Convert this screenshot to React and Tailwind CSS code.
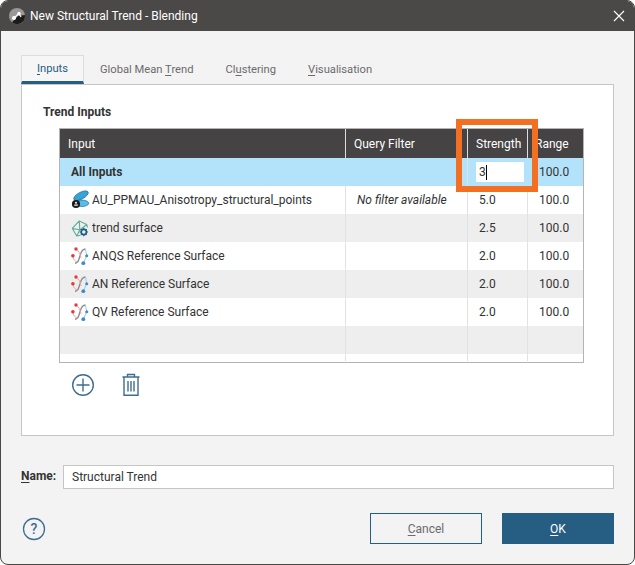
const FONT = { fontFamily: "Roboto, 'Liberation Sans', sans-serif" };

function RefIcon() {
  return (
    <svg width="20" height="20" viewBox="0 0 20 20" className="shrink-0" fill="none">
      <path d="M4 17.3 C8 17 8 12 9 9.7 C10 6 12 3 14.5 3" stroke="#8f8f8f" strokeWidth="1.4" />
      <path d="M5 3 C8 5 9.5 8 10 12 M1.7 9.7 C2 13 4 15 6.5 16.5" stroke="#eda3a3" strokeWidth="1" />
      <path d="M14.5 3 L15.7 9.7 L12.3 17.3" stroke="#9cc6e4" strokeWidth="1" />
      <circle cx="5" cy="3" r="1.7" fill="#e5393b" />
      <circle cx="1.9" cy="9.7" r="1.8" fill="#e5393b" />
      <circle cx="15.7" cy="9.7" r="1.5" fill="#3c8cc8" />
      <circle cx="12.3" cy="17.2" r="1.9" fill="#3c8cc8" />
    </svg>
  );
}

function PointsIcon() {
  return (
    <svg width="20" height="20" viewBox="0 0 20 20" className="shrink-0">
      <ellipse cx="10" cy="5.7" rx="8" ry="3.4" transform="rotate(-28 10 5.7)" fill="#37a4d6" stroke="#1d6d96" strokeWidth="0.7" />
      <ellipse cx="10.7" cy="13.3" rx="7" ry="3.2" fill="#58bde6" stroke="#1d6d96" strokeWidth="0.7" />
      <circle cx="5" cy="14" r="4.1" fill="#1c1c1c" />
      <circle cx="5" cy="12.8" r="1" fill="#fff" />
      <rect x="3.2" y="14.5" width="3.6" height="1.2" fill="#fff" />
    </svg>
  );
}

function SurfaceIcon() {
  return (
    <svg width="20" height="20" viewBox="0 0 20 20" className="shrink-0" fill="none">
      <path d="M1.2 10.3 L8.3 3 L15.7 6.5 L16.5 9.5 M1.2 10.3 L5.7 18 L9.5 17.2 M1.2 10.3 L8.8 12 L15.7 6.5 M8.3 3 L8.8 12 L5.7 18" stroke="#5fae98" strokeWidth="1.1" strokeLinejoin="round" />
      <circle cx="12.8" cy="14" r="2.6" stroke="#1f5f85" strokeWidth="1.7" />
      <path d="M12.8 9.8 V11 M12.8 17 V18.2 M8.6 14 H9.8 M15.8 14 H17 M9.9 11.1 L10.7 11.9 M14.9 16.1 L15.7 16.9 M9.9 16.9 L10.7 16.1 M14.9 11.9 L15.7 11.1" stroke="#1f5f85" strokeWidth="1.2" />
    </svg>
  );
}

function AppIcon() {
  return (
    <svg width="16" height="16" viewBox="0 0 16 16" className="shrink-0">
      <circle cx="8" cy="8" r="8" fill="#9a9896" />
      <path d="M3 14.2 A8 8 0 0 0 15.9 7 L9 8 Z" fill="#1b1b1b" />
      <circle cx="5" cy="10" r="2" fill="#fff" />
      <circle cx="10" cy="5.5" r="1.7" fill="#fff" />
      <path d="M5 10 L10 5.5 L12 9" stroke="#fff" strokeWidth="1.2" fill="none" />
    </svg>
  );
}

const rows = [
  { name: "AU_PPMAU_Anisotropy_structural_points", icon: <PointsIcon />, filter: "No filter available", strength: "5.0", range: "100.0", bg: "bg-white" },
  { name: "trend surface", icon: <SurfaceIcon />, filter: "", strength: "2.5", range: "100.0", bg: "bg-[#eeeeee]" },
  { name: "ANQS Reference Surface", icon: <RefIcon />, filter: "", strength: "2.0", range: "100.0", bg: "bg-white" },
  { name: "AN Reference Surface", icon: <RefIcon />, filter: "", strength: "2.0", range: "100.0", bg: "bg-[#eeeeee]" },
  { name: "QV Reference Surface", icon: <RefIcon />, filter: "", strength: "2.0", range: "100.0", bg: "bg-white" },
];

const GRID = "grid grid-cols-[286px_122px_60px_1fr]";
const CELL = "flex items-center border-r border-[#e2e2e2] last:border-r-0";

function Tab({ pre, u, post }) {
  return (
    <div className="mb-[1px] flex h-[26px] items-center px-[16px] text-[11.2px] text-[#6b6b6b]">
      <span>{pre}<span className="underline underline-offset-2">{u}</span>{post}</span>
    </div>
  );
}

export default function App() {
  return (
    <div style={FONT} className="relative flex h-[565px] w-[635px] flex-col overflow-hidden rounded-[8px] border border-[#4a4846] bg-[#f3f3f3] text-[#333333]">
      <div className="flex h-[30px] shrink-0 items-center bg-[#4b4947] pl-[8px] pr-[9px] text-white">
        <AppIcon />
        <span className="ml-[5px] text-[12px]">New Structural Trend - Blending</span>
        <svg className="ml-auto" width="12" height="12" viewBox="0 0 12 12" stroke="#fff" strokeWidth="1.1">
          <path d="M1 1 L11 11 M11 1 L1 11" />
        </svg>
      </div>

      <div className="flex flex-1 flex-col pl-[20px] pr-[20px] pt-[24px]">
        <div className="flex h-[29px] items-end">
          <div className="flex h-[29px] w-[63px] items-center justify-center border-x border-t border-[#dddddd] border-b-[3px] border-b-[#265d82] bg-[#f6f6f6] pt-[2px] text-[11.2px] text-[#265d82]">
            <span><span className="underline underline-offset-2">I</span>nputs</span>
          </div>
          <Tab pre="Global Mean " u="T" post="rend" />
          <Tab pre="Cl" u="u" post="stering" />
          <Tab pre="" u="V" post="isualisation" />
        </div>

        <div className="h-[352px] border border-[#c6c6c6] bg-white pl-[21px] pr-[29px] pt-[19px]">
          <div className="h-[24px] text-[12px] font-bold leading-[16px] text-[#333333]">Trend Inputs</div>
          <div className="ml-[16px] h-[235px] border border-[#b4b4b4] bg-white text-[12px]">
            <div className={`${GRID} h-[29px] bg-[#454343] text-white`}>
              <div className="flex items-center border-r border-[#dddddd] pl-[8px]">Input</div>
              <div className="flex items-center border-r border-[#dddddd] pl-[8px]">Query Filter</div>
              <div className="flex items-center border-r border-[#dddddd] pl-[8px]">Strength</div>
              <div className="flex items-center pl-[7px]">Range</div>
            </div>
            <div className={`${GRID} h-[28px] bg-[#b3e3fb]`}>
              <div className="flex items-center pl-[11px] font-bold">All Inputs</div>
              <div className={CELL} />
              <div className="flex items-center pl-[8px]">
                <div className="flex h-[20px] w-[48px] items-center bg-white pl-[3px]">
                  3<span className="h-[15px] w-px bg-black" />
                </div>
              </div>
              <div className="flex items-center pl-[11px]">100.0</div>
            </div>
            {rows.map((r) => (
              <div key={r.name} className={`${GRID} h-[28px] ${r.bg}`}>
                <div className={`${CELL} gap-[1px] pl-[11px]`}>
                  {r.icon}
                  <span>{r.name}</span>
                </div>
                <div className={`${CELL} pl-[11px] italic`}>{r.filter}</div>
                <div className={`${CELL} pl-[11px]`}>{r.strength}</div>
                <div className={`${CELL} pl-[11px]`}>{r.range}</div>
              </div>
            ))}
            <div className={`${GRID} h-[28px] bg-[#eeeeee]`}>
              <div className={CELL} /><div className={CELL} /><div className={CELL} /><div className={CELL} />
            </div>
            <div className={`${GRID} h-[7px] bg-white`}>
              <div className={CELL} /><div className={CELL} /><div className={CELL} /><div className={CELL} />
            </div>
          </div>
          <div className="ml-[16px] mt-[10px] flex items-center gap-[26px] pl-[12px]">
            <svg width="24" height="24" viewBox="0 0 24 24" fill="none" stroke="#3e6d8f" strokeWidth="1.4">
              <circle cx="12" cy="12" r="10.3" />
              <path d="M12 5.5 V18.5 M5.5 12 H18.5" />
            </svg>
            <svg width="20" height="24" viewBox="0 0 20 24" fill="none" stroke="#3e6d8f" strokeWidth="1.4">
              <path d="M1.5 4 H18.5 M6.5 4 V1.5 H13.5 V4 M3 4 V22.3 H17 V4 M7 8 V18.5 M10 8 V18.5 M13 8 V18.5" />
            </svg>
          </div>
        </div>

        <div className="mt-[28px] flex h-[25px] items-center">
          <span className="mb-[2px] w-[42px] text-[12px] font-bold text-[#333333]">
            <span className="underline underline-offset-2">N</span>ame:
          </span>
          <div className="flex h-[24px] flex-1 items-center border border-[#c6c6c6] bg-white pl-[8px] text-[12px]">
            Structural Trend
          </div>
        </div>

        <div className="mt-[24px] flex items-center">
          <svg className="ml-[1px]" width="24" height="24" viewBox="0 0 24 24" fill="none" stroke="#3e6d8f" strokeWidth="1.3">
            <circle cx="12" cy="12" r="10.5" />
            <text x="12" y="17" textAnchor="middle" fill="#3e6d8f" stroke="none" fontSize="14" fontWeight="500" fontFamily="Roboto, sans-serif">?</text>
          </svg>
          <div className="ml-auto flex gap-[20px] text-[12px]">
            <div className="flex h-[31px] w-[112px] items-center justify-center border border-[#265d82] bg-[#f3f3f3] text-[#6b6b6b]">
              <span><span className="underline underline-offset-2">C</span>ancel</span>
            </div>
            <div className="flex h-[31px] w-[112px] items-center justify-center bg-[#265d82] text-white">
              <span><span className="underline underline-offset-2">O</span>K</span>
            </div>
          </div>
        </div>
      </div>

      <div className="absolute left-[455px] top-[118px] h-[73px] w-[82px] border-[6px] border-[#f36f21]" />
    </div>
  );
}
